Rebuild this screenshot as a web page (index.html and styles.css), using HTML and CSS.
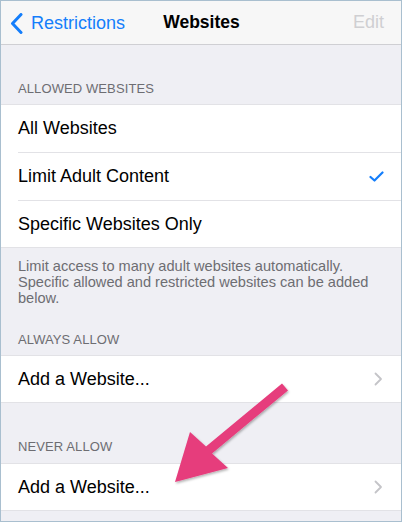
FILE: index.html
```html
<!DOCTYPE html>
<html>
<head>
<meta charset="utf-8">
<link rel="stylesheet" href="styles.css">
</head>
<body>
<div class="screen">
  <header class="nav">
    <div class="nav-back">
      <svg class="back-chev" width="13" height="21" viewBox="0 0 13 21"><path d="M11 1.5 L2.5 10.5 L11 19.5" fill="none" stroke="#147efb" stroke-width="3" stroke-linecap="round" stroke-linejoin="round"/></svg>
      <span>Restrictions</span>
    </div>
    <div class="nav-title">Websites</div>
    <div class="nav-edit">Edit</div>
  </header>

  <div class="sec-head first">ALLOWED WEBSITES</div>
  <div class="group">
    <div class="row"><span>All Websites</span></div>
    <div class="row"><span>Limit Adult Content</span>
      <svg class="check" width="15" height="11" viewBox="0 0 15 11"><path d="M1.5 6 L5.5 9.5 L13.5 1.5" fill="none" stroke="#147efb" stroke-width="2.2" stroke-linecap="round" stroke-linejoin="round"/></svg>
    </div>
    <div class="row"><span>Specific Websites Only</span></div>
  </div>
  <div class="sec-foot">Limit access to many adult websites automatically. Specific allowed and restricted websites can be added below.</div>

  <div class="sec-head mid">ALWAYS ALLOW</div>
  <div class="group">
    <div class="row"><span>Add a Website...</span>
      <svg class="chev" width="9" height="14" viewBox="0 0 9 14"><path d="M1.5 1.5 L7 7 L1.5 12.5" fill="none" stroke="#c4c4c8" stroke-width="1.8" stroke-linecap="round" stroke-linejoin="round"/></svg>
    </div>
  </div>

  <div class="sec-head last">NEVER ALLOW</div>
  <div class="group">
    <div class="row"><span>Add a Website...</span>
      <svg class="chev" width="9" height="14" viewBox="0 0 9 14"><path d="M1.5 1.5 L7 7 L1.5 12.5" fill="none" stroke="#c4c4c8" stroke-width="1.8" stroke-linecap="round" stroke-linejoin="round"/></svg>
    </div>
  </div>

  <svg class="arrow" width="402" height="522" viewBox="0 0 402 522">
    <defs>
      <filter id="sh" x="-20%" y="-20%" width="140%" height="140%">
        <feDropShadow dx="1" dy="1.5" stdDeviation="1.2" flood-color="#000" flood-opacity="0.3"/>
      </filter>
    </defs>
    <polygon points="175,482 190,432 206,446.6 282,383.6 288,390.4 212,453.4 228,468" fill="#e63c7c" filter="url(#sh)"/>
  </svg>
</div>
</body>
</html>
```
FILE: styles.css
```css
* { box-sizing: border-box; }
html, body { margin: 0; padding: 0; }
body {
  font-family: "Liberation Sans", Arial, sans-serif;
  background: #ffffff;
}
.screen {
  position: relative;
  width: 402px;
  height: 522px;
  border: 1px solid #a9bfcf;
  background: #efeff4;
  overflow: hidden;
}
.nav {
  height: 44px;
  background: #f7f7f7;
  border-bottom: 1px solid #cfcfd3;
  display: flex;
  align-items: center;
  justify-content: space-between;
  padding: 0 17px 0 9px;
  position: relative;
}
.nav-back {
  display: flex;
  align-items: center;
  gap: 8px;
  color: #147efb;
  font-size: 18px;
  padding-top: 1px;
}
.back-chev { margin-top: 1px; }
.nav-title {
  position: absolute;
  left: 0;
  right: 0;
  text-align: center;
  font-weight: bold;
  font-size: 17.5px;
  color: #000;
  pointer-events: none;
  padding-left: 1px;
}
.nav-edit {
  color: #cfcfd2;
  font-size: 18px;
}
.sec-head {
  display: flex;
  align-items: flex-end;
  padding: 0 17px 8px;
  font-size: 13px;
  color: #6d6d72;
  letter-spacing: 0.1px;
}
.sec-head.first { height: 59px; }
.sec-head.mid { height: 49px; }
.sec-head.last { height: 60px; padding-bottom: 9px; }
.group {
  background: #fff;
  border-top: 1px solid #e2e2e6;
  border-bottom: 1px solid #e2e2e6;
}
.row {
  height: 48px;
  margin-left: 17px;
  padding-right: 17px;
  display: flex;
  align-items: center;
  justify-content: space-between;
  font-size: 18px;
  color: #000;
  border-bottom: 1px solid #e2e2e6;
}
.row:last-child { border-bottom: none; height: 46px; }
.check { margin-right: 0; }
.chev { margin-right: 1px; }
.sec-foot {
  padding: 10px 8px 0 17px;
  font-size: 14.6px;
  line-height: 16px;
  color: #6d6d72;
}
.arrow {
  position: absolute;
  left: -1px;
  top: -1px;
  pointer-events: none;
}
```
